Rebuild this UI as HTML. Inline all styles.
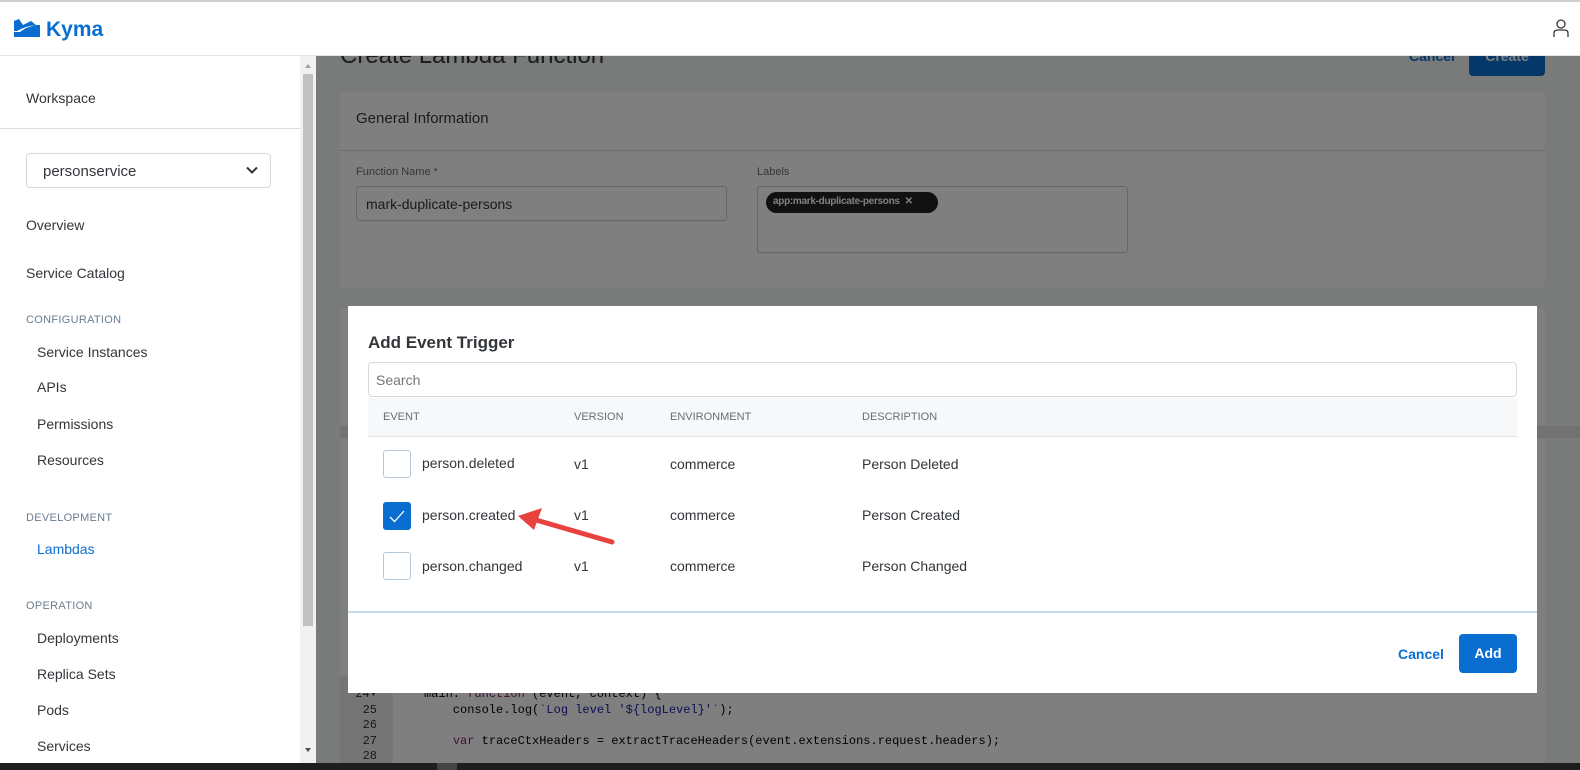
<!DOCTYPE html>
<html><head><meta charset="utf-8"><style>
*{box-sizing:border-box;margin:0;padding:0}
body{width:1580px;height:770px;overflow:hidden;position:relative;font-family:"Liberation Sans",sans-serif;background:#fff;color:#32363a}
.abs{position:absolute}
.top{left:0;top:0;width:1580px;height:56px;background:#fff;border-top:2px solid #cfcfcf;border-bottom:1px solid #e4e4e4;z-index:5}
.side{left:0;top:56px;width:300px;height:707px;background:#fff}
.side .t{position:absolute;font-size:14px;color:#32363a}
.side .h{position:absolute;font-size:11px;color:#6a7d90;letter-spacing:.3px}
.main{left:316px;top:56px;width:1264px;height:707px;background:#f3f4f5}
.ov{left:316px;top:56px;width:1264px;height:707px;background:rgba(0,0,0,.5)}
.modal{left:348px;top:306px;width:1189px;height:387px;background:#fff}
.row{position:absolute;left:0;font-size:14px;color:#32363a}
.cb{position:absolute;left:35px;width:28px;height:28px;border:1px solid #b6c8da;border-radius:3px;background:#fff}
</style></head><body>
<div class="abs top">
  <svg class="abs" style="left:14px;top:17px" width="26" height="20" viewBox="0 0 26 20"><path d="M0 6 L0 18 L26 18 L26 6 L22 6 Q12 8 6 13 L0 13 Z" fill="#0a6ed1"/><path d="M0 2 L5 0 L9 6 L17 2 L22 6 Q12 7 3 12 L0 12 Z" fill="#0a6ed1"/></svg>
  <div class="abs" style="left:46px;top:16px;font-size:21px;font-weight:bold;color:#0a6ed1">Kyma</div>
  <svg class="abs" style="left:1553px;top:17px" width="20" height="20" viewBox="0 0 20 20"><circle cx="8" cy="5" r="4" stroke="#32363a" fill="none" stroke-width="1.3"/><path d="M1 18 V14 Q1 11 5 11 H11 Q15 11 15 14 V18" stroke="#32363a" fill="none" stroke-width="1.3"/></svg>
</div>
<div class="abs side">
  <div class="t" style="left:26px;top:34px">Workspace</div>
  <div class="abs" style="left:0;top:72px;width:300px;height:1px;background:#ddd"></div>
  <div class="abs" style="left:26px;top:97px;width:245px;height:35px;border:1px solid #d5dadd;border-radius:4px"></div>
  <div class="t" style="left:43px;top:107px;font-size:15px">personservice</div>
  <svg class="abs" style="left:246px;top:110px" width="12" height="9" viewBox="0 0 12 9"><path d="M1 1.5 L6 6.5 L11 1.5" stroke="#32363a" stroke-width="2" fill="none"/></svg>
  <div class="t" style="left:26px;top:161px">Overview</div>
  <div class="t" style="left:26px;top:209px">Service Catalog</div>
  <div class="h" style="left:26px;top:258px">CONFIGURATION</div>
  <div class="t" style="left:37px;top:288px">Service Instances</div>
  <div class="t" style="left:37px;top:323px">APIs</div>
  <div class="t" style="left:37px;top:360px">Permissions</div>
  <div class="t" style="left:37px;top:396px">Resources</div>
  <div class="h" style="left:26px;top:456px">DEVELOPMENT</div>
  <div class="t" style="left:37px;top:485px;color:#0a6ed1">Lambdas</div>
  <div class="h" style="left:26px;top:544px">OPERATION</div>
  <div class="t" style="left:37px;top:574px">Deployments</div>
  <div class="t" style="left:37px;top:610px">Replica Sets</div>
  <div class="t" style="left:37px;top:646px">Pods</div>
  <div class="t" style="left:37px;top:682px">Services</div>
</div>
<div class="abs" style="left:300px;top:56px;width:16px;height:707px;background:#f1f1f1"></div>
<div class="abs" style="left:303px;top:74px;width:10px;height:552px;background:#c1c1c1"></div>
<div class="abs" style="left:305px;top:64px;width:0;height:0;border:3px solid transparent;border-bottom:4px solid #a3a3a3;border-top:0"></div>
<div class="abs" style="left:305px;top:748px;width:0;height:0;border:3px solid transparent;border-top:4px solid #505050;border-bottom:0"></div>
<div class="abs main">
  <div class="abs" style="left:24px;top:-14px;font-size:24px;color:#32363a">Create Lambda Function</div>
  <div class="abs" style="left:1093px;top:-8px;font-size:14px;font-weight:bold;color:#0a6ed1">Cancel</div>
  <div class="abs" style="left:1153px;top:-20px;width:76px;height:40px;background:#0a6ed1;border-radius:4px;color:#fff;font-weight:bold;font-size:14px;text-align:center;line-height:40px">Create</div>
  <div class="abs" style="left:24px;top:36px;width:1205px;height:196px;background:#fff;border-radius:4px">
    <div class="abs" style="left:16px;top:18px;font-size:15px">General Information</div>
    <div class="abs" style="left:0;top:58px;width:1205px;height:1px;background:#ddd"></div>
    <div class="abs" style="left:16px;top:74px;font-size:11px;color:#6a6d70">Function Name *</div>
    <div class="abs" style="left:16px;top:94px;width:371px;height:35px;border:1px solid #ccc;border-radius:3px;padding:9px;font-size:14px">mark-duplicate-persons</div>
    <div class="abs" style="left:417px;top:74px;font-size:11px;color:#6a6d70">Labels</div>
    <div class="abs" style="left:417px;top:94px;width:371px;height:67px;border:1px solid #ccc;border-radius:3px"></div>
    <div class="abs" style="left:426px;top:100px;width:172px;height:21px;background:#222;border-radius:11px;color:#fff;font-size:10px;font-weight:bold;padding:4px 7px;white-space:nowrap;letter-spacing:-.3px">app:mark-duplicate-persons&nbsp; ✕</div>
  </div>
  <div class="abs" style="left:24px;top:252px;width:1205px;height:400px;background:#fff;border-radius:4px"></div>
  <div class="abs" style="left:24px;top:370px;width:1240px;height:12px;background:#e5e5e5"></div>
  <div class="abs" style="left:24px;top:620px;width:1205px;height:87px;background:#fff;font-family:'Liberation Mono',monospace;font-size:12px;line-height:15.5px">
    <div class="abs" style="left:0;top:0;width:53px;height:87px;background:#ebebeb"></div>
    <div class="abs" style="left:7px;top:11px;color:#333;text-align:right;width:30px">24▾<br>25<br>26<br>27<br>28</div>
    <div class="abs" style="left:84px;top:11px;white-space:pre;color:#000">main: <span style="color:#7a1f6e">function</span> (event, context) {
    console.log(<span style="color:#1a1aa6">`Log level '${logLevel}'`</span>);

    <span style="color:#7a1f6e">var</span> traceCtxHeaders = extractTraceHeaders(event.extensions.request.headers);</div>
  </div>
</div>
<div class="abs ov"></div>
<div class="abs modal">
  <div class="abs" style="left:20px;top:27px;font-size:17px;font-weight:bold;color:#32363a">Add Event Trigger</div>
  <div class="abs" style="left:20px;top:56px;width:1149px;height:35px;border:1px solid #d5dadd;border-radius:4px;padding:9px 7px;font-size:14px;color:#74777a">Search</div>
  <div class="abs" style="left:20px;top:92px;width:1149px;height:39px;background:#f7f8f9;border-bottom:1px solid #e5e5e5;font-size:11px;color:#6a6d70">
    <span class="abs" style="left:15px;top:13px">EVENT</span>
    <span class="abs" style="left:206px;top:13px">VERSION</span>
    <span class="abs" style="left:302px;top:13px">ENVIRONMENT</span>
    <span class="abs" style="left:494px;top:13px">DESCRIPTION</span>
  </div>
  <div class="cb" style="top:144px"></div>
  <div class="cb" style="top:196px;background:#0a6ed1;border-color:#0a6ed1"><svg width="26" height="26" viewBox="0 0 26 26"><path d="M6 14 L10.5 18.5 L20 8" stroke="#fff" stroke-width="1.3" fill="none"/></svg></div>
  <div class="cb" style="top:246px"></div>
  <div class="row" style="top:149px;left:74px">person.deleted</div>
  <div class="row" style="top:201px;left:74px">person.created</div>
  <div class="row" style="top:252px;left:74px">person.changed</div>
  <div class="row" style="top:150px;left:226px">v1</div><div class="row" style="top:201px;left:226px">v1</div><div class="row" style="top:252px;left:226px">v1</div>
  <div class="row" style="top:150px;left:322px">commerce</div><div class="row" style="top:201px;left:322px">commerce</div><div class="row" style="top:252px;left:322px">commerce</div>
  <div class="row" style="top:150px;left:514px">Person Deleted</div><div class="row" style="top:201px;left:514px">Person Created</div><div class="row" style="top:252px;left:514px">Person Changed</div>
  <svg class="abs" style="left:160px;top:200px" width="110" height="45" viewBox="0 0 110 45"><path d="M104 36 L28 14" stroke="#e8423f" stroke-width="5" stroke-linecap="round"/><path d="M10 10 L34 2 L26 24 Z" fill="#e8423f"/></svg>
  <div class="abs" style="left:0;top:305px;width:1189px;height:2px;background:#c6dbee"></div>
  <div class="abs" style="left:1050px;top:340px;font-size:14px;font-weight:bold;color:#0a6ed1">Cancel</div>
  <div class="abs" style="left:1111px;top:328px;width:58px;height:39px;background:#0a6ed1;border-radius:4px;color:#fff;font-weight:bold;font-size:14px;text-align:center;line-height:39px">Add</div>
</div>
<div class="abs" style="left:0;top:763px;width:1580px;height:7px;background:#1e1e1e"></div>
<div class="abs" style="left:437px;top:763px;width:20px;height:7px;background:#444"></div>
</body></html>
